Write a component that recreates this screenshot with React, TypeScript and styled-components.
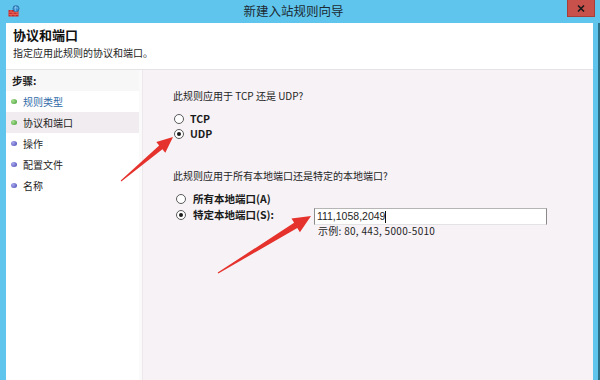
import React from "react";
import styled, { createGlobalStyle } from "styled-components";

const GlobalStyle = createGlobalStyle`
  html, body {
    margin: 0;
    padding: 0;
    overflow: hidden;
  }
  body {
    font-family: "Noto Sans CJK SC", "Noto Sans", sans-serif;
    color: #1e1e1e;
  }
`;

const steps = [
  { label: "规则类型", done: true, link: true },
  { label: "协议和端口", done: true, current: true },
  { label: "操作" },
  { label: "配置文件" },
  { label: "名称" },
];

const App = () => {
  return (
    <Window>
      <GlobalStyle />
      <TitleBar>
        <AppIcon viewBox="0 0 12 12">
          <rect x="0.5" y="5" width="10" height="6.5" fill="#c8282c" />
          <path d="M0.5 7.2h10M0.5 9.4h10M3 5v2.2M7 5v2.2M5 7.2v2.2M9 7.2v2.2M3 9.4v2.1M7 9.4v2.1" stroke="#f08a70" strokeWidth="0.6" />
          <circle cx="8" cy="3.6" r="3.1" fill="#3a8fd0" stroke="#1f5f95" strokeWidth="0.6" />
          <path d="M6 3.2c1-.6 2.6-.6 4 0M8 .6c-1 1.2-1 4.6 0 6" stroke="#b8e4ff" strokeWidth="0.5" fill="none" />
        </AppIcon>
        <Title>新建入站规则向导</Title>
        <CloseButton type="button">
          <svg width="8" height="7" viewBox="0 0 8 7">
            <path d="M1 0.5l6 6M7 0.5l-6 6" stroke="#1a1a1a" strokeWidth="1.6" />
          </svg>
        </CloseButton>
      </TitleBar>
      <Frame>
        <Header>
          <Heading>协议和端口</Heading>
          <SubHeading>指定应用此规则的协议和端口。</SubHeading>
        </Header>
        <Body>
          <Sidebar>
            <StepsTitle>步骤:</StepsTitle>
            {steps.map((s) => (
              <StepRow key={s.label} $current={s.current}>
                <Bullet $done={s.done} />
                <StepLabel $link={s.link}>{s.label}</StepLabel>
              </StepRow>
            ))}
          </Sidebar>
          <Main>
            <Question $top={19}>此规则应用于 TCP 还是 UDP?</Question>
            <RadioGroup $indent={1}>
              <RadioRow>
                <Radio />
                <RadioLabel>TCP</RadioLabel>
              </RadioRow>
              <RadioRow>
                <Radio $checked />
                <RadioLabel>UDP</RadioLabel>
              </RadioRow>
            </RadioGroup>
            <Question $top={28}>此规则应用于所有本地端口还是特定的本地端口?</Question>
            <RadioGroup $indent={3}>
              <RadioRow>
                <Radio />
                <RadioLabel $gap={7}>所有本地端口(A)</RadioLabel>
              </RadioRow>
              <PortRow>
                <RadioRow>
                  <Radio $checked />
                  <RadioLabel $gap={7}>特定本地端口(S):</RadioLabel>
                </RadioRow>
                <PortField>
                  <PortInput>
                    111,1058,2049<Caret />
                  </PortInput>
                  <Example>示例: 80, 443, 5000-5010</Example>
                </PortField>
              </PortRow>
            </RadioGroup>
          </Main>
        </Body>
      </Frame>
      <Arrows viewBox="0 0 600 380">
        <polygon
          points="121.3,181.4 162.4,149.3 165.3,152.8 173,137 156.3,142 159.2,145.5 120.7,180.6"
          fill="#e5322c"
        />
        <polygon
          points="218.3,273.5 297.3,228 299.9,232.2 311,216 291.5,218.6 294.1,222.8 217.7,272.5"
          fill="#e5322c"
        />
      </Arrows>
    </Window>
  );
};

export default App;

const Window = styled.div`
  position: relative;
  width: 600px;
  height: 380px;
  background: #60c5ec;
  display: flex;
  flex-direction: column;
  overflow: hidden;
`;

const TitleBar = styled.div`
  height: 23px;
  display: flex;
  align-items: flex-start;
  flex-shrink: 0;
`;

const AppIcon = styled.svg`
  width: 12px;
  height: 12px;
  margin: 5px 0 0 8px;
  flex-shrink: 0;
`;

const Title = styled.div`
  flex: 1;
  text-align: center;
  font-size: 12.5px;
  line-height: 22px;
  color: #1b2a33;
`;

const CloseButton = styled.button`
  flex: 0 0 28px;
  width: 28px;
  height: 17px;
  margin: 0 5px 0 0;
  padding: 0;
  background: #c9514c;
  border: 1px solid #a83e3a;
  border-top: none;
  box-sizing: border-box;
  display: flex;
  align-items: center;
  justify-content: center;
`;

const Frame = styled.div`
  flex: 1;
  margin: 0 7px 0 6px;
  background: #ffffff;
  display: flex;
  flex-direction: column;
  position: relative;

  &::after {
    content: "";
    position: absolute;
    top: 0;
    bottom: 0;
    right: -7px;
    width: 2px;
    background: #2a6f86;
  }
`;

const Header = styled.div`
  height: 47px;
  box-sizing: border-box;
  padding: 4px 0 0 7px;
  border-bottom: 1px solid #e6e3e6;
  flex-shrink: 0;
`;

const Heading = styled.div`
  font-size: 13px;
  font-weight: 700;
  line-height: 16px;
  color: #111;
`;

const SubHeading = styled.div`
  font-size: 10px;
  line-height: 14px;
  margin-top: 3px;
`;

const Body = styled.div`
  flex: 1;
  display: flex;
`;

const Sidebar = styled.div`
  width: 133px;
  border-right: 1px solid #ece8ec;
  background: #ffffff;
  padding-right: 3px;
  box-shadow: inset -3px 0 0 #fbfafb;
`;

const StepsTitle = styled.div`
  height: 21px;
  line-height: 21px;
  padding-left: 6px;
  font-size: 10.5px;
  font-weight: 700;
  background: #f8f7f8;
`;

const StepRow = styled.div<{ $current?: boolean }>`
  height: 21px;
  display: flex;
  align-items: center;
  padding-left: 5px;
  background: ${(p) => (p.$current ? "#f0ecf0" : "transparent")};
`;

const Bullet = styled.span<{ $done?: boolean }>`
  width: 6px;
  height: 5px;
  border-radius: 50%;
  background: ${(p) =>
    p.$done
      ? "radial-gradient(circle at 35% 35%, #a8e090, #3f9a32)"
      : "radial-gradient(circle at 35% 35%, #a8a8f0, #4646b0)"};
`;

const StepLabel = styled.span<{ $link?: boolean }>`
  margin-left: 6px;
  font-size: 10px;
  color: ${(p) => (p.$link ? "#2f6aa8" : "#1e1e1e")};
`;

const Main = styled.div`
  flex: 1;
  background: #f6f2f6;
  padding-left: 30px;
`;

const Question = styled.div<{ $top: number }>`
  margin-top: ${(p) => p.$top}px;
  font-size: 10px;
  line-height: 14px;
`;

const RadioGroup = styled.div<{ $indent: number }>`
  margin-top: 8px;
  margin-left: ${(p) => p.$indent}px;
  display: flex;
  flex-direction: column;
`;

const RadioRow = styled.div`
  height: 15px;
  display: flex;
  align-items: center;
`;

const Radio = styled.span<{ $checked?: boolean }>`
  width: 10px;
  height: 10px;
  box-sizing: border-box;
  border-radius: 50%;
  border: 1px solid #5a5a5a;
  background: #ffffff;
  display: flex;
  align-items: center;
  justify-content: center;

  &::after {
    content: "";
    width: 4px;
    height: 4px;
    border-radius: 50%;
    background: ${(p) => (p.$checked ? "#1a1a1a" : "transparent")};
  }
`;

const RadioLabel = styled.span<{ $gap?: number }>`
  margin-left: ${(p) => p.$gap ?? 6}px;
  font-size: 10.5px;
  font-weight: 700;
  color: #1a1a1a;
`;

const PortRow = styled.div`
  display: flex;
  align-items: flex-start;
  margin-top: 1px;
`;

const PortField = styled.div`
  margin-left: 40px;
  margin-top: 1px;
  display: flex;
  flex-direction: column;
`;

const PortInput = styled.div`
  width: 233px;
  height: 17px;
  box-sizing: border-box;
  background: #ffffff;
  border: 1px solid #8a8a8a;
  border-top-color: #b5b5b5;
  border-bottom-color: #e3e3e3;
  padding-left: 2px;
  font-family: "Liberation Sans", Arial, sans-serif;
  font-size: 10.5px;
  line-height: 15px;
  display: flex;
  align-items: center;
`;

const Caret = styled.span`
  width: 1px;
  height: 12px;
  background: #111;
`;

const Example = styled.div`
  margin-left: 4px;
  font-size: 10px;
  line-height: 12px;
  letter-spacing: 0.3px;
`;

const Arrows = styled.svg`
  position: absolute;
  left: 0;
  top: 0;
  width: 600px;
  height: 380px;
  pointer-events: none;
`;
